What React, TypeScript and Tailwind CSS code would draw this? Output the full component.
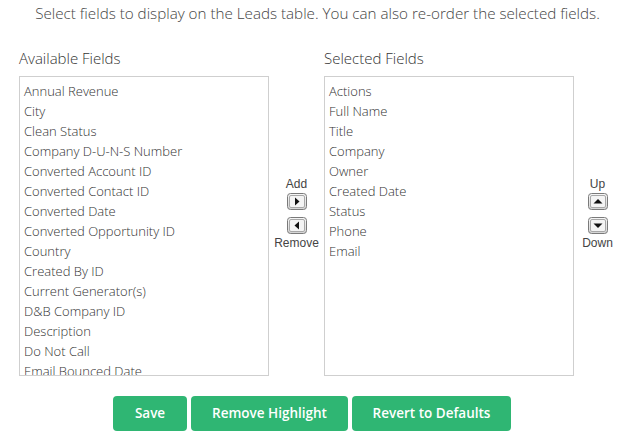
import React from "react";

const available = [
  "Annual Revenue",
  "City",
  "Clean Status",
  "Company D-U-N-S Number",
  "Converted Account ID",
  "Converted Contact ID",
  "Converted Date",
  "Converted Opportunity ID",
  "Country",
  "Created By ID",
  "Current Generator(s)",
  "D&B Company ID",
  "Description",
  "Do Not Call",
  "Email Bounced Date",
  "Email Bounced Reason",
];

const selected = ["Actions", "Full Name", "Title", "Company", "Owner", "Created Date", "Status", "Phone", "Email"];

const ArrowBtn = ({ dir }: { dir: "right" | "left" | "up" | "down" }) => {
  const pts = {
    right: "8,4.5 12.5,8.5 8,12.5",
    left: "12,4.5 7.5,8.5 12,12.5",
    up: "5.5,10.5 10,6 14.5,10.5",
    down: "5.5,6.5 10,11 14.5,6.5",
  }[dir];
  return (
    <svg width="20" height="17" viewBox="0 0 20 17" className="block w-[20px] h-[17px]">
      <defs>
        <linearGradient id={`g-${dir}`} x1="0" y1="0" x2="0" y2="1">
          <stop offset="0" stopColor="#f7f7f7" />
          <stop offset="1" stopColor="#d4d4d4" />
        </linearGradient>
      </defs>
      <rect x="0.5" y="0.5" width="19" height="16" rx="3" fill={`url(#g-${dir})`} stroke="#7a7a7a" />
      <rect x="2.5" y="2.5" width="15" height="12" rx="1.5" fill="#f4f4f4" stroke="#a8a8a8" />
      <polygon points={pts} fill="#111" />
    </svg>
  );
};

const ListBox = ({ items }: { items: string[] }) => (
  <div className="w-[250px] h-[300px] border border-[#cfcfcf] overflow-hidden pt-[4px] pl-[4px]">
    {items.map((it) => (
      <div key={it} className="text-[13px] leading-[20px] text-[#333] font-light whitespace-nowrap">
        {it}
      </div>
    ))}
  </div>
);

export default function App() {
  return (
    <div className="w-[633px] h-[439px] bg-white font-['Open_Sans',sans-serif] overflow-hidden">
      <p className="text-center text-[15.2px] text-[#444] font-light pt-[3px] leading-[20px] pl-[2px]">
        Select fields to display on the Leads table. You can also re-order the selected fields.
      </p>
      <div className="flex pl-[19px] mt-[25px]">
        <div>
          <h3 className="text-[15px] text-[#333] font-light leading-[20px] mb-[8px]">Available Fields</h3>
          <ListBox items={available} />
        </div>
        <div className="w-[55px] flex flex-col items-center pt-[129px] font-['Liberation_Sans',sans-serif] text-[12px] text-[#444] leading-[14px]">
          <span>Add</span>
          <div className="mt-[2px]">
            <ArrowBtn dir="right" />
          </div>
          <div className="mt-[7px] mb-[2px]">
            <ArrowBtn dir="left" />
          </div>
          <span>Remove</span>
        </div>
        <div>
          <h3 className="text-[15px] text-[#333] font-light leading-[20px] mb-[8px]">Selected Fields</h3>
          <ListBox items={selected} />
        </div>
        <div className="w-[47px] flex flex-col items-center pt-[129px] font-['Liberation_Sans',sans-serif] text-[12px] text-[#444] leading-[14px]">
          <span>Up</span>
          <div className="mt-[2px]">
            <ArrowBtn dir="up" />
          </div>
          <div className="mt-[7px] mb-[2px]">
            <ArrowBtn dir="down" />
          </div>
          <span>Down</span>
        </div>
      </div>
      <div className="flex gap-[4px] mt-[20px] ml-[113px]">
        <button className="w-[74px] h-[35px] rounded-[4px] bg-[#2fb673] text-white text-[13.5px] font-semibold">Save</button>
        <button className="w-[157px] h-[35px] rounded-[4px] bg-[#2fb673] text-white text-[13.5px] font-semibold">Remove Highlight</button>
        <button className="w-[159px] h-[35px] rounded-[4px] bg-[#2fb673] text-white text-[13.5px] font-semibold">Revert to Defaults</button>
      </div>
    </div>
  );
}
